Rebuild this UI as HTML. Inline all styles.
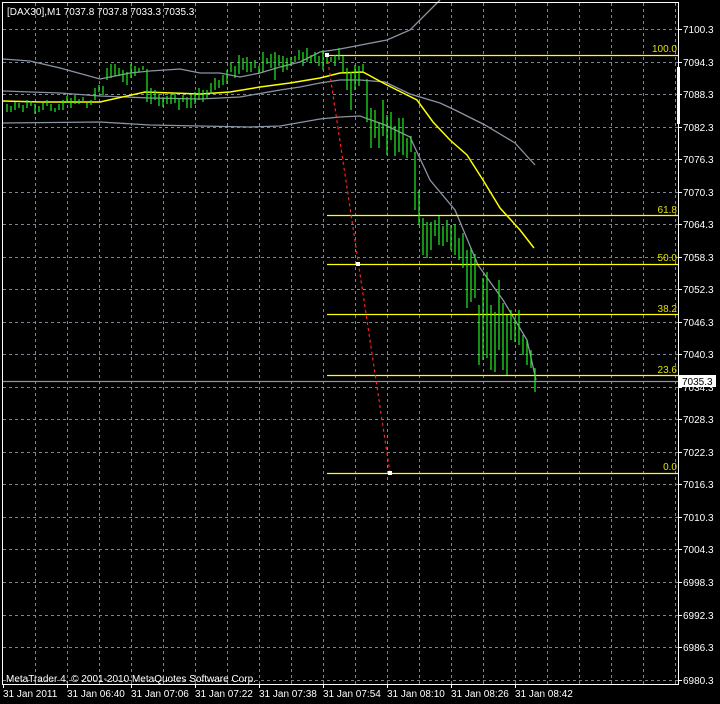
<!DOCTYPE html>
<html><head><meta charset="utf-8"><style>
html,body{margin:0;padding:0;background:#000;}
svg{display:block}
text{font-family:"Liberation Sans",sans-serif;font-size:10px;}
</style></head><body>
<svg width="720" height="704" viewBox="0 0 720 704" xmlns="http://www.w3.org/2000/svg">
<rect width="720" height="704" fill="#000"/>
<g stroke="#7a8696" stroke-width="1" stroke-dasharray="3,3" fill="none">
<path d="M3 29.5H678M3 62.5H678M3 94.5H678M3 127.5H678M3 159.5H678M3 192.5H678M3 224.5H678M3 257.5H678M3 289.5H678M3 322.5H678M3 354.5H678M3 387.5H678M3 419.5H678M3 452.5H678M3 484.5H678M3 517.5H678M3 549.5H678M3 582.5H678M3 615.5H678M3 647.5H678M3 680.5H678"/>
<path d="M35.5 3V684M67.5 3V684M99.5 3V684M131.5 3V684M163.5 3V684M195.5 3V684M227.5 3V684M259.5 3V684M291.5 3V684M323.5 3V684M355.5 3V684M387.5 3V684M419.5 3V684M451.5 3V684M483.5 3V684M515.5 3V684M547.5 3V684M579.5 3V684M611.5 3V684M643.5 3V684M675.5 3V684"/>
</g>
<g fill="none" stroke="#8a94a2" stroke-width="1.3">
<polyline points="3,59 30,61 60,68 100,79 130,73 150,71 180,69 200,73 220,73 240,77 260,73 280,67 300,62 320,52 340,49 387,40 410,30 425,15 440,0"/>
<polyline points="3,91 60,93 100,96 150,98 200,99 240,97 280,90 300,87 320,83 340,80 360,80 385,82 410,94 440,103 455,110 485,125 515,143 535,165"/>
<polyline points="3,123 100,122 150,125 250,127 280,126 320,119 340,117 360,116 385,125 410,137 430,180 455,210 478,265 503,300 527,340 536,380"/>
</g>
<polyline fill="none" stroke="#ffff00" stroke-width="1.5" points="3,101 40,102 100,102 145,92 200,94 230,92 260,87 290,83 320,78 340,73 363,72 387,85 417,100 433,122 450,140 467,155 483,180 500,208 520,230 534,248"/>
<path d="M3 381.5H678" stroke="#8a94a2" stroke-width="1.3"/>
<g stroke="#ffff00" stroke-width="1.2">
<path d="M327 55.5H678M327 215.5H678M327 264.5H678M327 314.5H678M327 375.5H678M327 473.5H678"/>
</g>
<g fill="#e0e000" text-anchor="end">
<text x="677" y="52">100.0</text><text x="677" y="213">61.8</text><text x="677" y="261">50.0</text><text x="677" y="312">38.2</text><text x="677" y="373">23.6</text><text x="677" y="470">0.0</text>
</g>
<path stroke="#22ee22" stroke-width="1.2" fill="none" d="M7 104V112M11 106V112M15 102V110M19 103V108M23 105V112M27 100V108M31 101V106M35 104V114M39 106V112M43 103V110M47 100V106M51 104V111M55 108V112M59 104V110M63 100V110M67 96V103M71 98V108M75 95V104M79 99V104M83 97V102M87 103V108M91 100V105M95 88V100M99 85V92M103 86V95M107 68V80M111 64V78M115 64V76M119 68V76M123 70V82M127 72V85M131 64V78M135 66V76M139 68V72M143 66V70M147 69V102M151 88V104M155 90V100M159 94V106M163 97V107M167 96V104M171 94V104M175 93V103M179 98V110M183 95V102M187 97V108M191 94V108M195 92V104M199 88V100M203 90V102M207 90V98M211 83V94M215 78V90M219 80V88M223 75V85M227 70V84M231 62V72M235 66V78M239 55V74M243 58V70M247 57V72M251 62V72M255 60V68M259 66V74M263 52V72M267 58V64M271 54V68M275 52V80M279 55V66M283 56V72M287 58V70M291 57V66M295 56V62M299 50V60M303 52V66M307 48V62M311 55V63M315 52V62M319 56V66M323 50V70M327 55V64M331 57V62M335 55V66M339 48V60M343 56V72M347 68V90M351 72V110M355 65V90M359 66V86M363 64V72M367 79V122M371 108V148M375 110V138M379 122V148M383 100V136M387 115V155M391 112V140M395 126V156M399 118V152M403 118V155M407 138V158M411 136V152M415 152V210M419 190V225M423 218V255M427 222V258M431 222V250M435 220V236M439 216V245M443 226V246M447 220V242M451 225V250M455 224V255M459 238V260M463 233V268M467 250V308M471 248V302M475 254V298M479 305V365M483 278V360M487 272V358M491 305V370M495 312V372M499 280V350M503 303V370M507 315V375M511 310V340M515 318V342M519 310V345M523 335V355M527 340V365M531 350V368M535 368V392"/>
<path d="M327 55L390 473" stroke="#ff2020" stroke-width="1.2" stroke-dasharray="3,3"/>
<rect x="325" y="53" width="4" height="4" fill="#fff"/>
<rect x="356" y="262" width="4" height="4" fill="#fff"/>
<rect x="388" y="471" width="4" height="4" fill="#fff"/>
<rect x="2.5" y="2.5" width="676" height="682" fill="none" stroke="#fff" stroke-width="1"/>
<rect x="677" y="67" width="3" height="57" fill="#fff"/>
<g stroke="#fff"><path d="M678 29.5h4M678 62.5h4M678 94.5h4M678 127.5h4M678 159.5h4M678 192.5h4M678 224.5h4M678 257.5h4M678 289.5h4M678 322.5h4M678 354.5h4M678 387.5h4M678 419.5h4M678 452.5h4M678 484.5h4M678 517.5h4M678 549.5h4M678 582.5h4M678 615.5h4M678 647.5h4M678 680.5h4"/>
<path d="M3.5 684v4M67.5 684v4M131.5 684v4M195.5 684v4M259.5 684v4M323.5 684v4M387.5 684v4M451.5 684v4M515.5 684v4"/></g>
<g fill="#fff">
<text x="683" y="33">7100.3</text><text x="683" y="66">7094.3</text><text x="683" y="98">7088.3</text><text x="683" y="131">7082.3</text><text x="683" y="163">7076.3</text><text x="683" y="196">7070.3</text><text x="683" y="228">7064.3</text><text x="683" y="261">7058.3</text><text x="683" y="293">7052.3</text><text x="683" y="326">7046.3</text><text x="683" y="358">7040.3</text><text x="683" y="391">7034.3</text><text x="683" y="423">7028.3</text><text x="683" y="456">7022.3</text><text x="683" y="488">7016.3</text><text x="683" y="521">7010.3</text><text x="683" y="553">7004.3</text><text x="683" y="586">6998.3</text><text x="683" y="619">6992.3</text><text x="683" y="651">6986.3</text><text x="683" y="684">6980.3</text>
<g style="font-size:9.5px"><text x="3" y="697">31 Jan 2011</text><text x="67" y="697">31 Jan 06:40</text><text x="131" y="697">31 Jan 07:06</text><text x="195" y="697">31 Jan 07:22</text><text x="259" y="697">31 Jan 07:38</text><text x="323" y="697">31 Jan 07:54</text><text x="387" y="697">31 Jan 08:10</text><text x="451" y="697">31 Jan 08:26</text><text x="515" y="697">31 Jan 08:42</text></g>
<text x="6" y="682">MetaTrader 4, © 2001-2010 MetaQuotes Software Corp.</text>
<text x="7" y="15">[DAX30],M1  7037.8 7037.8 7033.3 7035.3</text>
</g>
<rect x="679" y="375" width="37" height="12" fill="#fff"/>
<text x="682" y="385" fill="#000">7035.3</text>
</svg>
</body></html>
